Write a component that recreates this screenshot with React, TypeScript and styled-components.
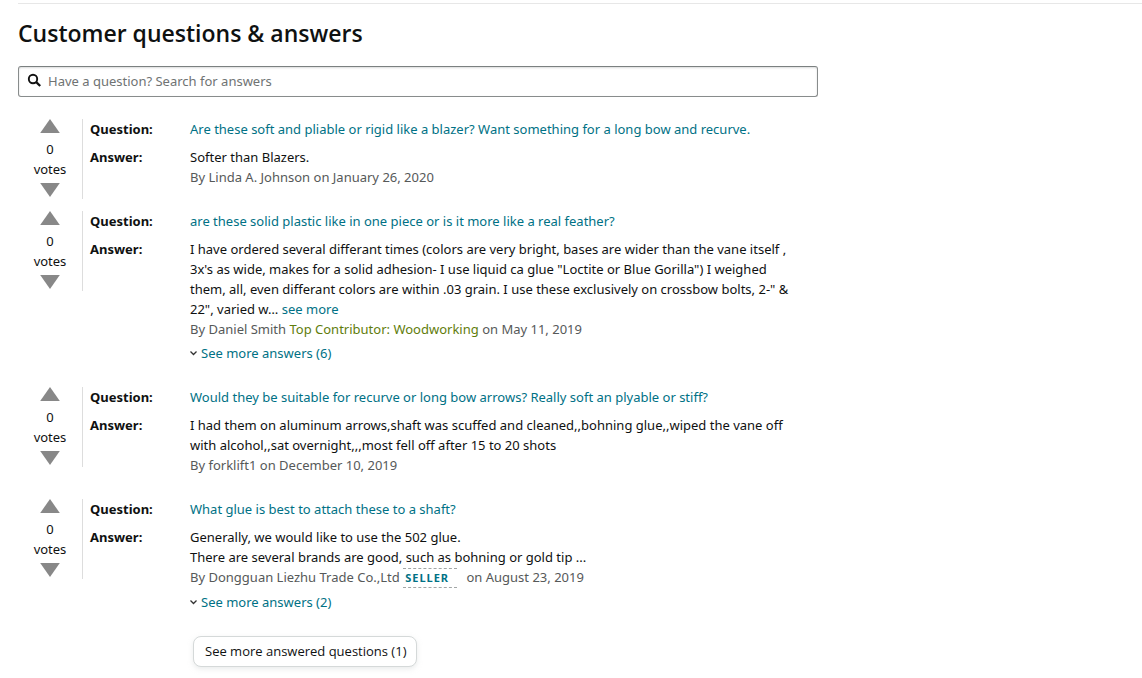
import React from "react";
import styled, { createGlobalStyle } from "styled-components";

const GlobalStyle = createGlobalStyle`
  *, *::before, *::after { box-sizing: border-box; }
  body {
    margin: 0;
    background: #fff;
    color: #0f1111;
    font-family: "Noto Sans", "Open Sans", sans-serif;
    font-size: 13px;
    line-height: 20px;
  }
`;

const Page = styled.main`
  padding: 3px 0 8px 18px;
`;

const Section = styled.section`
  border-top: 1px solid #e7e7e7;
  padding-top: 13px;
`;

const Title = styled.h2`
  margin: 0 0 17px;
  font-family: "Open Sans", "Noto Sans", sans-serif;
  font-size: 23px;
  line-height: 32px;
  font-weight: 600;
`;

const Content = styled.div`
  max-width: 800px;
`;

const SearchBox = styled.label`
  display: flex;
  align-items: center;
  gap: 6px;
  height: 31px;
  padding: 0 8px 2px;
  border: 1px solid #888c8c;
  border-top-color: #7b8080;
  border-radius: 3px;
  box-shadow: 0 1px 2px rgba(15, 17, 17, 0.15) inset;
`;

const SearchInput = styled.input`
  flex: 1;
  min-width: 0;
  padding: 0;
  border: 0;
  outline: 0;
  background: transparent;
  color: #0f1111;
  font: inherit;

  &::placeholder {
    color: #6f7373;
    opacity: 1;
  }
`;

const List = styled.ul`
  margin: 22px 0 0;
  padding: 0;
  list-style: none;
`;

const Item = styled.li`
  display: flex;
  align-items: flex-start;
`;

const Votes = styled.div`
  display: flex;
  flex-direction: column;
  align-items: center;
  flex: none;
  width: 65px;
  height: 80px;
  border-right: 1px solid #ddd;
  text-align: center;
`;

const VoteButton = styled.button`
  display: block;
  padding: 0;
  border: 0;
  background: none;
  color: #888;
  cursor: pointer;

  svg { display: block; }
`;

const VoteCount = styled.span`
  width: 34px;
  margin: 6px 0 4px;
`;

const Entries = styled.dl`
  display: grid;
  grid-template-columns: 100px minmax(0, 1fr);
  row-gap: 8px;
  flex: 1;
  min-width: 0;
  margin: 0;
  padding: 0 0 24px 7px;
`;

const Term = styled.dt`
  font-weight: 700;
`;

const Detail = styled.dd`
  margin: 0;
`;

const Line = styled.span`
  display: block;
`;

const Link = styled.a`
  color: #007185;
  text-decoration: none;
`;

const Byline = styled.div`
  color: #565959;
`;

const Contributor = styled.span`
  color: #5f7d0b;
`;

const SellerBadge = styled.a`
  display: inline-block;
  margin-right: 6px;
  padding: 0 8px 0 2px;
  border: 1px dashed #a2a6a6;
  border-width: 1px 0;
  color: #007185;
  font-size: 11px;
  line-height: 18px;
  font-weight: 700;
  letter-spacing: 1px;
  text-decoration: none;
`;

const MoreAnswers = styled.a`
  display: flex;
  align-items: center;
  gap: 4px;
  width: fit-content;
  margin-top: 4px;
  color: #007185;
  text-decoration: none;
`;

const MoreButton = styled.button`
  display: block;
  height: 31px;
  margin-left: 175px;
  padding: 0 10px 2px 11px;
  border: 1px solid #d5d9d9;
  border-radius: 8px;
  background: #fff;
  box-shadow: 0 2px 5px rgba(213, 217, 217, 0.5);
  color: #0f1111;
  font-family: "Open Sans", sans-serif;
  font-size: 13px;
  line-height: 20px;
  cursor: pointer;
`;

function SearchIcon() {
  return (
    <svg width="15" height="15" viewBox="0 0 15 15" fill="none" stroke="#111" aria-hidden="true">
      <circle cx="6" cy="6" r="4.2" strokeWidth="1.9" />
      <path d="M9.2 9.2L13.2 13" strokeWidth="2.3" />
    </svg>
  );
}

function Triangle({ down = false }: { down?: boolean }) {
  return (
    <svg width="20" height="14" viewBox="0 0 20 14" fill="currentColor" aria-hidden="true">
      <path d={down ? "M0.2 0H19.8L10 14Z" : "M0.2 14H19.8L10 0Z"} />
    </svg>
  );
}

function Chevron() {
  return (
    <svg width="7" height="6" viewBox="0 0 7 6" fill="none" stroke="#333" strokeWidth="1.3" aria-hidden="true">
      <path d="M0.5 1.5L3.5 4.5L6.5 1.5" />
    </svg>
  );
}

type Entry = {
  question: string;
  answer: string[];
  truncated?: boolean;
  author: string;
  contributor?: string;
  seller?: boolean;
  date: string;
  more?: number;
};

const entries: Entry[] = [
  {
    question: "Are these soft and pliable or rigid like a blazer? Want something for a long bow and recurve.",
    answer: ["Softer than Blazers."],
    author: "Linda A. Johnson",
    date: "January 26, 2020",
  },
  {
    question: "are these solid plastic like in one piece or is it more like a real feather?",
    answer: [
      "I have ordered several differant times (colors are very bright, bases are wider than the vane itself ,",
      "3x's as wide, makes for a solid adhesion- I use liquid ca glue \"Loctite or Blue Gorilla\") I weighed",
      "them, all, even differant colors are within .03 grain. I use these exclusively on crossbow bolts, 2-\" &",
      "22\", varied w…",
    ],
    truncated: true,
    author: "Daniel Smith",
    contributor: "Top Contributor: Woodworking",
    date: "May 11, 2019",
    more: 6,
  },
  {
    question: "Would they be suitable for recurve or long bow arrows? Really soft an plyable or stiff?",
    answer: [
      "I had them on aluminum arrows,shaft was scuffed and cleaned,,bohning glue,,wiped the vane off",
      "with alcohol,,sat overnight,,,most fell off after 15 to 20 shots",
    ],
    author: "forklift1",
    date: "December 10, 2019",
  },
  {
    question: "What glue is best to attach these to a shaft?",
    answer: [
      "Generally, we would like to use the 502 glue.",
      "There are several brands are good, such as bohning or gold tip ...",
    ],
    author: "Dongguan Liezhu Trade Co.,Ltd",
    seller: true,
    date: "August 23, 2019",
    more: 2,
  },
];

function QuestionItem({ entry }: { entry: Entry }) {
  const last = entry.answer.length - 1;
  return (
    <Item>
      <Votes>
        <VoteButton type="button" aria-label="Vote up"><Triangle /></VoteButton>
        <VoteCount>0 votes</VoteCount>
        <VoteButton type="button" aria-label="Vote down"><Triangle down /></VoteButton>
      </Votes>
      <Entries>
        <Term>Question:</Term>
        <Detail><Link href="#question">{entry.question}</Link></Detail>
        <Term>Answer:</Term>
        <Detail>
          {entry.answer.map((line, i) => (
            <Line key={i}>
              {line}
              {entry.truncated && i === last && <> <Link href="#full">see more</Link></>}
            </Line>
          ))}
          <Byline>
            By {entry.author}{" "}
            {entry.contributor && <><Contributor>{entry.contributor}</Contributor>{" "}</>}
            {entry.seller && <><SellerBadge href="#seller">SELLER</SellerBadge>{" "}</>}
            on {entry.date}
          </Byline>
          {entry.more && (
            <MoreAnswers href="#answers">
              <Chevron />
              See more answers ({entry.more})
            </MoreAnswers>
          )}
        </Detail>
      </Entries>
    </Item>
  );
}

export default function App() {
  return (
    <>
      <GlobalStyle />
      <Page>
        <Section>
          <Title>Customer questions &amp; answers</Title>
          <Content>
            <SearchBox>
              <SearchIcon />
              <SearchInput
                type="search"
                aria-label="Search questions and answers"
                placeholder="Have a question? Search for answers"
              />
            </SearchBox>
            <List>
              {entries.map((entry) => (
                <QuestionItem key={entry.question} entry={entry} />
              ))}
            </List>
            <MoreButton type="button">See more answered questions (1)</MoreButton>
          </Content>
        </Section>
      </Page>
    </>
  );
}
